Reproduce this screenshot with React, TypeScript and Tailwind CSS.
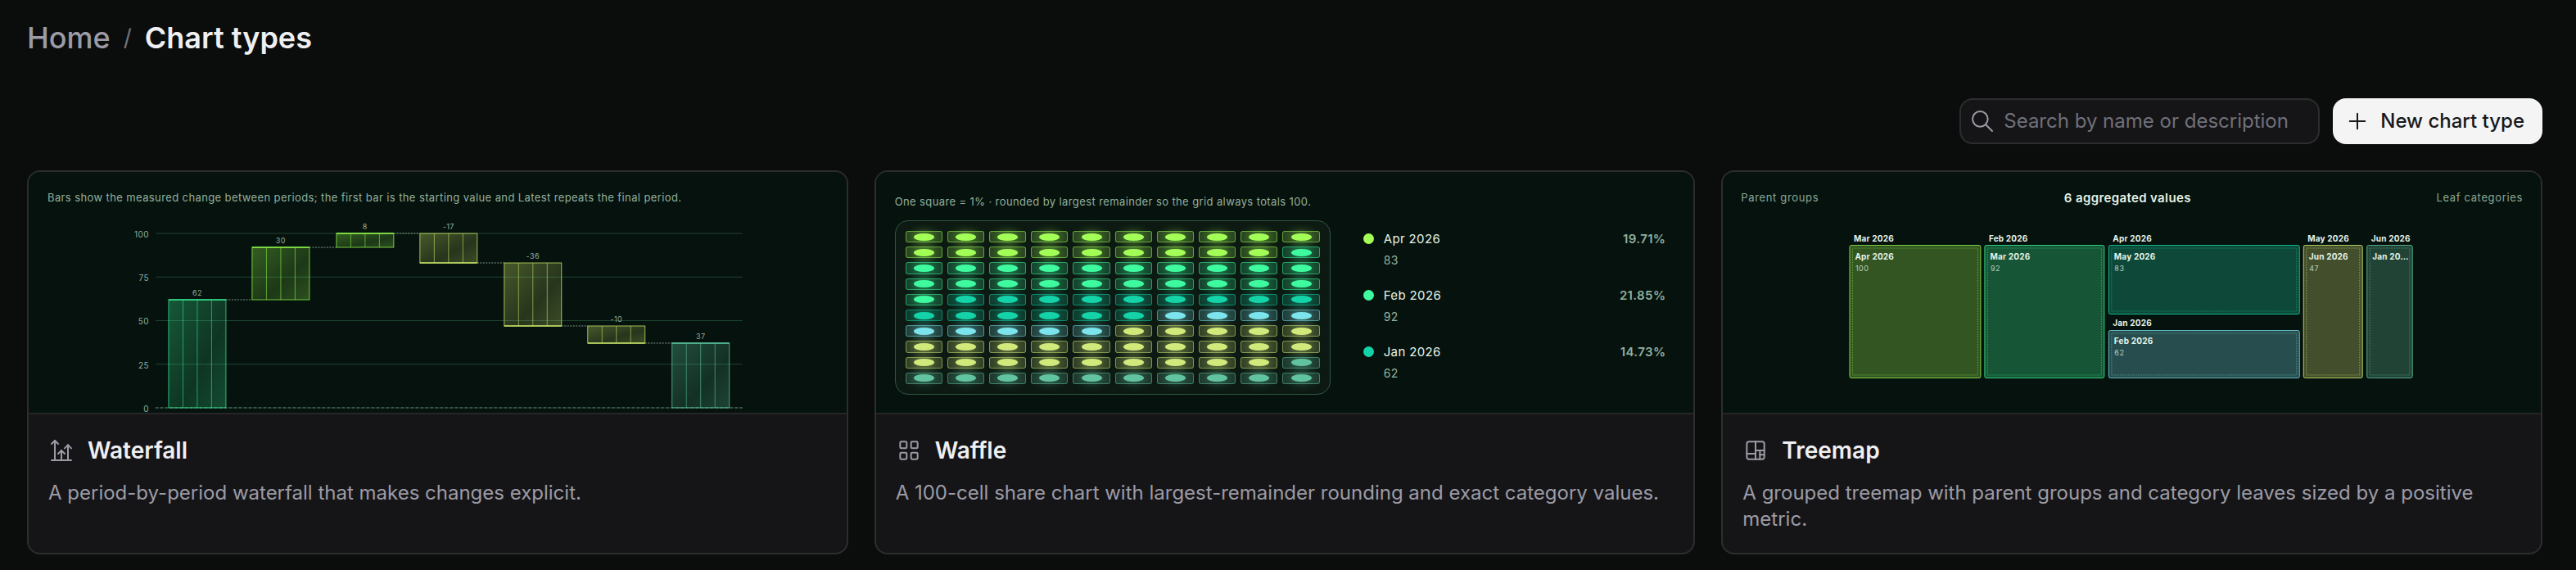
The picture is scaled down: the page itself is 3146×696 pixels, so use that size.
import {
  TbChartArrowsVertical,
  TbChartTreemap,
  TbLayoutGrid,
  TbPlus,
  TbSearch,
} from "react-icons/tb";
import type { ReactNode } from "react";
import type { IconType } from "react-icons";

const LIME = "#a3ff57";
const MINT = "#3ffba0";
const TEAL = "#14d3a8";
const SKY = "#7ce4ec";
const OLIVE = "#d2ea7c";
const SAGE = "#62c3a0";

/* ---------- Waterfall ---------- */

type Bar = { x: number; from: number; to: number; label: string; color: string; down?: boolean };

const bars: Bar[] = [
  { x: 171, from: 0, to: 62, label: "62", color: "#35e08d" },
  { x: 273, from: 62, to: 92, label: "30", color: "#8cf04a" },
  { x: 376, from: 92, to: 100, label: "8", color: "#8cf04a" },
  { x: 478, from: 83, to: 100, label: "-17", color: "#c6e067", down: true },
  { x: 581, from: 47, to: 83, label: "-36", color: "#c6e067", down: true },
  { x: 683, from: 37, to: 47, label: "-10", color: "#c6e067", down: true },
  { x: 786, from: 0, to: 37, label: "37", color: "#59c39b" },
];

const BAR_W = 70;
const yOf = (v: number) => 288 - v * 2.13;

function Waterfall() {
  return (
    <div className="relative h-[294px]">
      <p className="px-[23px] pt-[23px] text-[13px] leading-4 tracking-[0.03em] text-[#92b09d]">
        Bars show the measured change between periods; the first bar is the starting value and
        Latest repeats the final period.
      </p>
      <svg
        className="absolute inset-0 h-full w-full"
        viewBox="0 0 999 294"
        preserveAspectRatio="xMidYMid meet"
        role="img"
        aria-label="Waterfall chart"
      >
        <defs>
          {bars.map((b, i) => (
            <linearGradient key={i} id={`bar${i}`} x1="0" y1="0" x2="1" y2="1">
              <stop offset="0" stopColor={b.color} stopOpacity="0.34" />
              <stop offset="0.6" stopColor={b.color} stopOpacity="0.17" />
              <stop offset="1" stopColor={b.color} stopOpacity="0.28" />
            </linearGradient>
          ))}
        </defs>
        {[100, 75, 50, 25, 0].map((v) => (
          <g key={v}>
            <text x="147" y={yOf(v) + 5} textAnchor="end" fontSize="10" letterSpacing="0.4" fill="#92b09d">
              {v}
            </text>
            <line x1="155" x2="872" y1={yOf(v)} y2={yOf(v)} stroke="#1f4432" strokeWidth="1" />
          </g>
        ))}
        <line x1="155" x2="872" y1={yOf(0)} y2={yOf(0)} stroke="#5d7d6b" strokeDasharray="3 3" />
        {bars.map((b, i) => {
          const top = Math.round(yOf(b.to));
          const h = Math.round(yOf(b.from)) - top;
          const next = bars[i + 1];
          const end = top + (b.down ? h : 0);
          return (
            <g key={i}>
              <rect x={b.x} y={top} width={BAR_W} height={h} fill={`url(#bar${i})`} stroke={b.color} strokeOpacity="0.8" />
              {[1, 2, 3].map((n) => (
                <line
                  key={n}
                  x1={b.x + (BAR_W / 4) * n}
                  x2={b.x + (BAR_W / 4) * n}
                  y1={top}
                  y2={top + h}
                  stroke={b.color}
                  strokeOpacity="0.6"
                />
              ))}
              <line x1={b.x} x2={b.x + BAR_W} y1={end} y2={end} stroke={b.color} strokeWidth="1.5" />
              {next && (
                <line x1={b.x + BAR_W} x2={next.x} y1={end} y2={end} stroke="#7d9c8a" strokeDasharray="2 1.5" />
              )}
              <text x={b.x + BAR_W / 2} y={top - 5} textAnchor="middle" fontSize="9" letterSpacing="0.4" fill="#92b09d">
                {b.label}
              </text>
            </g>
          );
        })}
      </svg>
    </div>
  );
}

/* ---------- Waffle ---------- */

const runs: [string, number][] = [
  [LIME, 19],
  [MINT, 22],
  [TEAL, 15],
  [SKY, 9],
  [OLIVE, 24],
  [SAGE, 11],
];
const cells = runs.flatMap(([color, n]) => Array.from({ length: n }, () => color));

const legend = [
  { label: "Apr 2026", value: "83", share: "19.71%", color: LIME },
  { label: "Feb 2026", value: "92", share: "21.85%", color: MINT },
  { label: "Jan 2026", value: "62", share: "14.73%", color: TEAL },
];

function Waffle() {
  return (
    <div className="flex h-[294px] flex-col px-[23px] pt-7">
      <p className="text-[13px] leading-4 tracking-[0.03em] text-[#92b09d]">
        One square = 1% · rounded by largest remainder so the grid always totals 100.
      </p>
      <div className="mt-[15px] flex gap-10">
        <div className="grid h-[213px] w-[532px] shrink-0 grid-cols-10 gap-x-[6px] gap-y-[5px] rounded-2xl border border-[#2f5541] bg-[#0d1a13] p-3">
          {cells.map((color, i) => (
            <span
              key={i}
              className="flex items-center justify-center rounded-[3px] border"
              style={{ borderColor: `${color}80`, backgroundColor: `${color}2e` }}
            >
              <span
                className="h-[9px] w-[25px] rounded-[50%]"
                style={{ backgroundColor: color, boxShadow: `0 0 12px 1px ${color}80` }}
              />
            </span>
          ))}
        </div>
        <ul className="flex grow flex-col gap-[21px] pt-[13px] pr-[11px]">
          {legend.map((row) => (
            <li key={row.label} className="flex h-12 gap-3">
              <span className="mt-[3px] size-[13px] rounded-full" style={{ backgroundColor: row.color }} />
              <span className="flex grow flex-col gap-[6px] leading-5">
                <span className="text-[15px] tracking-wide text-[#e4f3e8]">{row.label}</span>
                <span className="text-[14px] tracking-wide text-[#92b09d]">{row.value}</span>
              </span>
              <span className="text-[15px] leading-5 font-semibold tracking-wide text-[#92b09d]">{row.share}</span>
            </li>
          ))}
        </ul>
      </div>
    </div>
  );
}

/* ---------- Treemap ---------- */

const leaves = [
  { x: 155, y: 89.5, w: 160, h: 162, group: "Mar 2026", label: "Apr 2026", value: "100", color: "#8cf04a", fill: "#335522" },
  { x: 320, y: 89.5, w: 146, h: 162, group: "Feb 2026", label: "Mar 2026", value: "92", color: "#35f092", fill: "#165535" },
  { x: 471.5, y: 89.5, w: 233, h: 84, group: "Apr 2026", label: "May 2026", value: "83", color: "#14d3a0", fill: "#0e4839" },
  { x: 471.5, y: 193.5, w: 233, h: 58, group: "Jan 2026", label: "Feb 2026", value: "62", color: "#74d6dd", fill: "#274d4e" },
  { x: 709.5, y: 89.5, w: 72, h: 162, group: "May 2026", label: "Jun 2026", value: "47", color: "#cde673", fill: "#434f2c" },
  { x: 787, y: 89.5, w: 55.5, h: 162, group: "Jun 2026", label: "Jan 20…", value: "", color: "#5fc29c", fill: "#214336" },
];

function Treemap() {
  return (
    <div className="relative h-[294px]">
      <div className="flex items-start justify-between px-[22px] pt-[22px] text-[13px] leading-[18px] tracking-wider text-[#8aa997]">
        <span>Parent groups</span>
        <span className="text-[15px] leading-5 font-semibold tracking-wide text-[#e4f3e8]">6 aggregated values</span>
        <span>Leaf categories</span>
      </div>
      <svg
        className="absolute inset-0 h-full w-full"
        viewBox="0 0 999 294"
        preserveAspectRatio="xMidYMid meet"
        role="img"
        aria-label="Treemap chart"
      >
        {leaves.map((l) => (
          <g key={l.label}>
            <text x={l.x + 5} y={l.y - 5} fontSize="10" fontWeight="700" letterSpacing="0.2" fill="#e4f3e8">
              {l.group}
            </text>
            <rect x={l.x} y={l.y} width={l.w} height={l.h} rx="2" fill={l.fill} stroke={l.color} strokeOpacity="0.85" />
            <rect
              x={l.x + 3.5}
              y={l.y + 3.5}
              width={l.w - 7}
              height={l.h - 7}
              fill="none"
              stroke={l.color}
              strokeOpacity="0.55"
              strokeDasharray="1 1"
            />
            <text x={l.x + 6.5} y={l.y + 17} fontSize="10" fontWeight="700" letterSpacing="0.2" fill="#e4f3e8">
              {l.label}
            </text>
            <text x={l.x + 7} y={l.y + 31} fontSize="9" letterSpacing="0.5" fill="#b9d0c0">
              {l.value}
            </text>
          </g>
        ))}
      </svg>
    </div>
  );
}

/* ---------- Page ---------- */

function Card({ icon: Icon, title, text, children }: { icon: IconType; title: string; text: string; children: ReactNode }) {
  return (
    <article className="overflow-hidden rounded-2xl border-2 border-[#2d2d30] bg-[#151518]">
      <div className="border-b-2 border-[#262629] bg-[#06120d]">{children}</div>
      <div className="px-6 pt-[26px] pb-[25px]">
        <div className="flex items-center gap-4">
          <Icon className="size-8 text-[#9c9ba5]" strokeWidth={1.5} />
          <h2 className="text-[28px] leading-9 font-semibold text-[#efeff1]">{title}</h2>
        </div>
        <p className="mt-[18px] min-h-16 text-2xl leading-8 text-[#9c9ba5]">{text}</p>
      </div>
    </article>
  );
}

export default function App() {
  return (
    <main className="min-h-screen bg-[#0a0d0b] pt-6 pr-[41px] pl-[33px] font-[Inter,sans-serif] text-[#efeff1]">
      <nav aria-label="Breadcrumb" className="flex items-center gap-4 text-4xl leading-[44px]">
        <a href="#home" className="font-medium text-[#9c9ba5]">Home</a>
        <span className="text-[28px] text-[#74737c]">/</span>
        <h1 className="font-semibold">Chart types</h1>
      </nav>
      <div className="mt-[52px] flex justify-end gap-4">
        <label className="flex h-14 w-[440px] items-center gap-2.5 rounded-2xl border-2 border-[#2d2d30] bg-[#151518] px-2.5">
          <TbSearch className="size-8 shrink-0 text-[#9c9ba5]" strokeWidth={1.5} />
          <input
            type="search"
            aria-label="Search by name or description"
            placeholder="Search by name or description"
            className="min-w-0 grow bg-transparent text-2xl outline-none placeholder:text-[#707079]"
          />
        </label>
        <button type="button" className="flex h-14 items-center gap-3 rounded-2xl bg-[#f4f4f5] pr-[22px] pl-[14px] text-2xl font-medium text-[#18181b]">
          <TbPlus className="size-8" strokeWidth={1.5} />
          New chart type
        </button>
      </div>
      <div className="mt-8 grid grid-cols-3 gap-8">
        <Card icon={TbChartArrowsVertical} title="Waterfall" text="A period-by-period waterfall that makes changes explicit.">
          <Waterfall />
        </Card>
        <Card icon={TbLayoutGrid} title="Waffle" text="A 100-cell share chart with largest-remainder rounding and exact category values.">
          <Waffle />
        </Card>
        <Card icon={TbChartTreemap} title="Treemap" text="A grouped treemap with parent groups and category leaves sized by a positive metric.">
          <Treemap />
        </Card>
      </div>
    </main>
  );
}
